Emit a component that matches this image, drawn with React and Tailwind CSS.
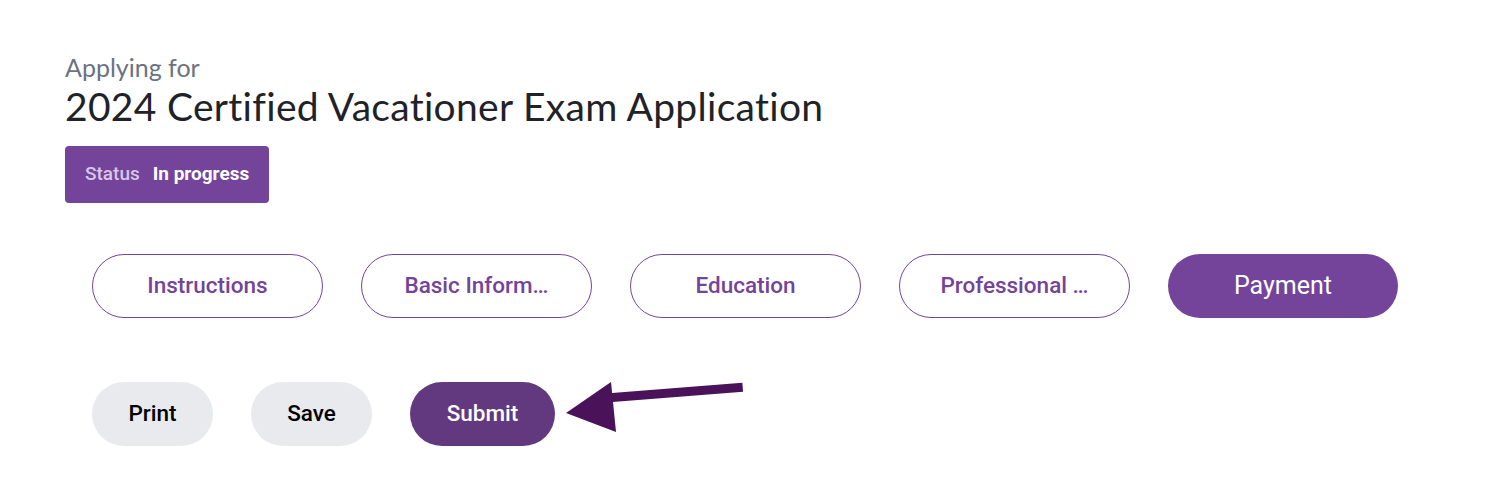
import React from "react";

const tabs = [
  { label: "Instructions", active: false },
  { label: "Basic Inform…", active: false },
  { label: "Education", active: false },
  { label: "Professional …", active: false },
  { label: "Payment", active: true },
];

// arrow pointing at the submit button
const Arrow = () => (
  <svg className="absolute left-[560px] top-[376px]" width="190" height="62" viewBox="0 0 190 62">
    <line x1="46" y1="22" x2="183" y2="16" stroke="#4a1259" strokeWidth="9" transform="rotate(-2 46 22)" />
    <polygon points="6,37 51,6 56,56" fill="#4a1259" />
  </svg>
);

const App = () => {
  return (
    <div className="relative w-[1488px] h-[484px] bg-white font-['Roboto',sans-serif]">
      <div className="pl-[65px] pt-[51px]">
        <div className="font-['Lato',sans-serif] text-[25px] leading-[32px] text-[#6b7280]">Applying for</div>
        <h1 className="font-['Lato',sans-serif] text-[39px] leading-[46px] tracking-[0.3px] text-[#1f2328]">
          2024 Certified Vacationer Exam Application
        </h1>
        <div className="mt-[17px] inline-flex h-[57px] items-center gap-[13px] rounded-[4px] bg-[#74449a] px-[20px] text-[19px]">
          <span className="font-medium text-[#d9c6e8]">Status</span>
          <span className="font-bold text-white">In progress</span>
        </div>

        <div className="mt-[51px] ml-[27px] flex gap-[38px]">
          {tabs.map((t) =>
            t.active ? (
              <button
                key={t.label}
                className="h-[64px] w-[230px] rounded-full bg-[#74449a] text-[25px] text-white"
              >
                {t.label}
              </button>
            ) : (
              <button
                key={t.label}
                className="h-[64px] w-[231px] rounded-full border border-[#74449a] bg-white text-[22.5px] font-medium text-[#74449a]"
              >
                {t.label}
              </button>
            )
          )}
        </div>

        <div className="mt-[64px] ml-[27px] flex gap-[38px]">
          <button className="h-[64px] w-[121px] rounded-full bg-[#e8eaed] text-[22.5px] font-medium text-black">Print</button>
          <button className="h-[64px] w-[121px] rounded-full bg-[#e8eaed] text-[22.5px] font-medium text-black">Save</button>
          <button className="h-[64px] w-[145px] rounded-full bg-[#62397f] text-[22.5px] font-medium text-white">Submit</button>
        </div>
      </div>
      <Arrow />
    </div>
  );
};

export default App;
